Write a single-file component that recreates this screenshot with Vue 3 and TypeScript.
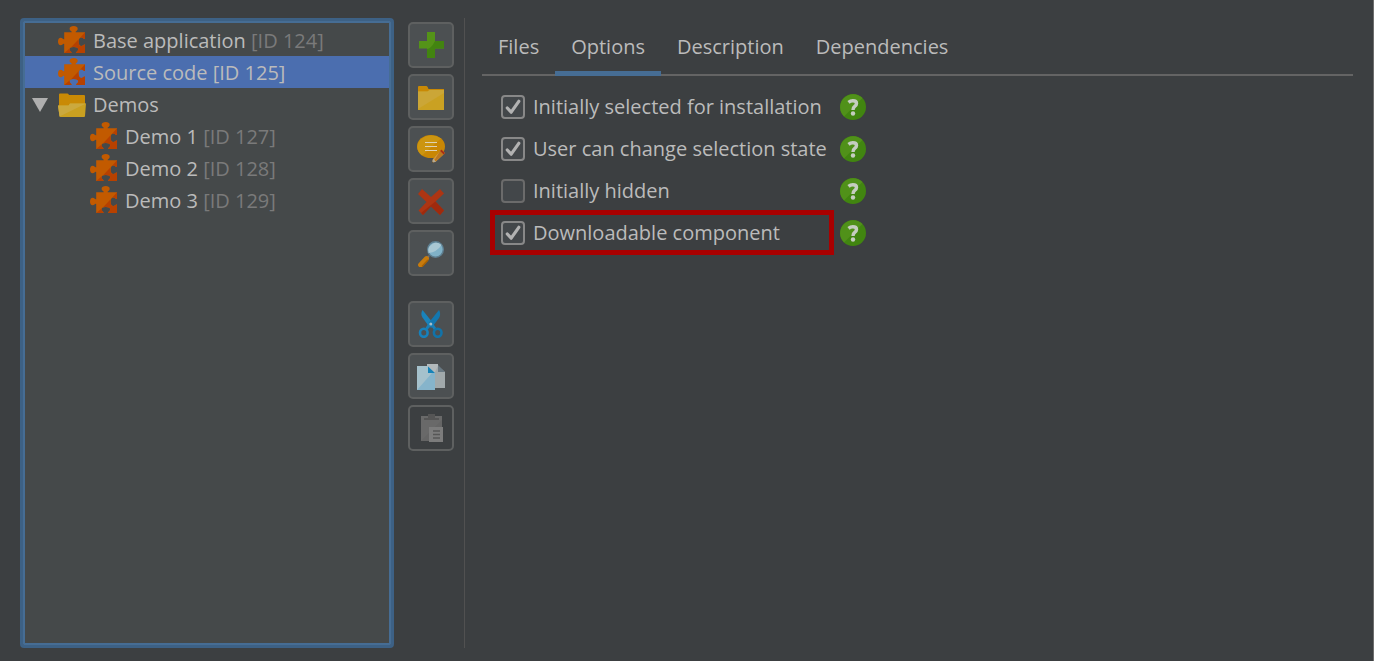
<script setup lang="ts">
import { ref } from 'vue'

interface TreeRow {
  label: string
  id?: number
  level: number
  folder?: boolean
}

interface Option {
  label: string
  checked: boolean
  highlighted?: boolean
}

const rows: TreeRow[] = [
  { label: 'Base application', id: 124, level: 0 },
  { label: 'Source code', id: 125, level: 0 },
  { label: 'Demos', level: 0, folder: true },
  { label: 'Demo 1', id: 127, level: 1 },
  { label: 'Demo 2', id: 128, level: 1 },
  { label: 'Demo 3', id: 129, level: 1 },
]
const selected = ref(1)

const tabs = ['Files', 'Options', 'Description', 'Dependencies']
const activeTab = ref('Options')

const options = ref<Option[]>([
  { label: 'Initially selected for installation', checked: true },
  { label: 'User can change selection state', checked: true },
  { label: 'Initially hidden', checked: false },
  { label: 'Downloadable component', checked: true, highlighted: true },
])
</script>

<template>
  <main class="window">
    <div class="tree" role="tree" aria-label="Components" tabindex="0">
      <div
        v-for="(row, i) in rows"
        :key="row.label"
        class="row"
        :class="{ selected: i === selected, child: row.level === 1 }"
        role="treeitem"
        :aria-selected="i === selected"
        :aria-level="row.level + 1"
        @click="selected = i"
      >
        <span class="twisty">
          <svg v-if="row.folder" width="16" height="14" viewBox="0 0 16 14">
            <path d="M0 0H16L8 14Z" fill="#afafaf" />
          </svg>
        </span>
        <svg v-if="row.folder" class="icon" width="28" height="28" viewBox="0 0 28 28">
          <path d="M1 4.500Q1 3.500 2 3.500H9.500Q10.500 3.500 11 5H26Q27 5 27 6V18H1Z" fill="#c98a05" />
          <path d="M0 15.500H10.500L12 13.500H28L27 26Q27 27 26 27H2.500Q1.500 27 1.500 26Z" fill="#c9a021" />
          <path d="M0 15.500H10.500L12 13.500H28L1.500 26.500Z" fill="#cba93e" />
        </svg>
        <svg v-else class="icon" width="28" height="28" viewBox="0 0 28 28">
          <path
            d="M6.200 6.300H13.700C14.200 5.200 11.600 4.800 11.600 2.700C11.600 1 13.500 0 15.700 0C18 0 19.700 1 19.700 2.700C19.700 4.800 17.200 5.200 17.700 6.300H27V12.800C25.800 13.600 25.200 11.500 23.300 11.500C21.600 11.500 20.600 13.400 20.600 15.800C20.600 18.200 21.600 20 23.300 20C25.200 20 25.800 18 27 18.800V27H18.300C17.700 25.800 20.200 25.300 20.200 23.300C20.200 21.700 18.200 20.900 15.900 20.900C13.600 20.900 11.600 21.700 11.600 23.300C11.600 25.300 14.100 25.800 13.500 27H6.200V18C5 17.300 4.600 19.300 2.700 19.300C1 19.300 0 17.700 0 15.600C0 13.500 1 11.800 2.700 11.800C4.600 11.800 5 13.900 6.200 13.200Z"
            fill="#c25a00"
          />
          <path
            d="M27 6.300V12.800C25.800 13.600 25.200 11.500 23.300 11.500C22.700 11.500 22.100 11.800 21.700 12.200ZM20.600 13.200C20.300 16 20.900 20 23.300 20C25.200 20 25.800 18 27 18.800V27H18.300C17.700 25.800 20.200 25.300 20.200 23.300C20.200 21.700 18.200 20.900 15.900 20.900C14.900 20.900 13.900 21 13.100 21.300L20.600 13.200ZM11.600 22.500V23.300C11.600 25.300 14.100 25.800 13.500 27H6.200Z"
            fill="#b74100"
          />
        </svg>
        <span class="name">{{ row.label }} <span v-if="row.id" class="id">[ID {{ row.id }}]</span></span>
      </div>
    </div>

    <div class="toolbar" role="toolbar" aria-label="Component actions">
      <div class="group">
        <button class="tool" type="button" aria-label="Add component">
          <svg width="28" height="28" viewBox="0 0 28 28">
            <path d="M10 1H18V10H27V17.500H18V27H10V17.500H2V10H10Z" fill="#549318" />
            <path d="M27 10V17.500H18V27H10V18Q14 18 18 10Z" fill="#428410" />
          </svg>
        </button>
        <button class="tool" type="button" aria-label="Add folder">
          <svg width="28" height="28" viewBox="0 0 28 28">
            <path d="M1 4Q1 3 2 3H9.500Q10.500 3 11.500 6H27V10H1Z" fill="#c98905" />
            <path d="M1 8.500H10.500L12.500 7H27V27H1Z" fill="#caa122" />
            <path d="M1 8.500H10.500L12.500 7H27V10L1 26Z" fill="#cba637" />
          </svg>
        </button>
        <button class="tool" type="button" aria-label="Edit comment">
          <svg width="28" height="28" viewBox="0 0 28 28">
            <ellipse cx="14" cy="11.500" rx="14" ry="11.500" fill="#c98704" />
            <path d="M5 20.500A14 11.500 0 1 1 24 3.500Z" fill="#cc9510" />
            <path d="M8 7.500H20M8 11.500H20M8 15.500H20" stroke="#ded1b4" stroke-width="1.200" />
            <path d="M24.500 14.500L28 18L19 26.500L15 28L16 24Z" fill="#d39a3f" />
            <path d="M23 16L26.500 19.500L18.500 26.500L17.500 25Z" fill="#bc7820" />
            <path d="M24.500 14.500L28 18L26.500 19.500L23 16Z" fill="#a92f13" />
            <path d="M16 24L19 26.500L15 28Z" fill="#b7ab94" />
            <path d="M15.400 26.500L16.800 27.500L15 28Z" fill="#4a3b26" />
          </svg>
        </button>
        <button class="tool" type="button" aria-label="Delete">
          <svg width="28" height="28" viewBox="0 0 28 28">
            <path d="M5 2L14 10L23 2L27 6.500L18.500 14.500L27 23.500L23 28L14 19.500L6 28L1.500 23.500L9.500 15L1 7Z" fill="#ad3513" />
            <path d="M18.500 14.500L27 23.500L23 28L14 19.500L6 28L4 26Z" fill="#9f2a0d" />
          </svg>
        </button>
        <button class="tool" type="button" aria-label="Search">
          <svg width="28" height="28" viewBox="0 0 28 28">
            <path d="M9 20L12 17" stroke="#707578" stroke-width="2" />
            <path d="M3.500 26L9.500 19.500" stroke="#c87b0c" stroke-width="4.800" stroke-linecap="round" />
            <path d="M5 27.500L11 21" stroke="#a96202" stroke-width="1.500" />
            <circle cx="18.500" cy="10.500" r="7.800" fill="#80b2c8" stroke="#5e7f91" stroke-width="1.400" />
            <path d="M11.500 14A8 8 0 0 1 24.500 6Q20 13 11.500 14Z" fill="#a9c8d4" />
          </svg>
        </button>
      </div>
      <div class="group">
        <button class="tool" type="button" aria-label="Cut">
          <svg width="28" height="28" viewBox="0 0 28 28">
            <path d="M5.500 0Q3.200 4 5.500 7.500L13 18L16 13Z" fill="#1a83bb" />
            <path d="M22 0Q24.300 4 22 8L14.500 18L11.500 13Z" fill="#1377af" />
            <path d="M12.500 14.500L9.500 19M15 14.500L18 19" stroke="#187fb7" stroke-width="3" />
            <ellipse cx="6.800" cy="22.800" rx="3.800" ry="4" fill="none" stroke="#1681bc" stroke-width="2.600" />
            <ellipse cx="20.700" cy="22.800" rx="3.800" ry="4" fill="none" stroke="#1173a9" stroke-width="2.600" />
            <circle cx="13.800" cy="14" r="1.500" fill="#a6bfcb" />
          </svg>
        </button>
        <button class="tool" type="button" aria-label="Copy">
          <svg width="28" height="28" viewBox="0 0 28 28">
            <path d="M10 2H21V26H10Z" fill="#b2b9bb" />
            <path d="M18 10L21 4L28 10V26H18Z" fill="#a1a9ab" />
            <path d="M21 3L28 10H21Z" fill="#697983" />
            <path d="M0 4H11V11H18V28H0Z" fill="#86b4cb" />
            <path d="M0 4H11V11H15L0 28Z" fill="#a5c1cc" />
            <path d="M11 4.500L18 11H11Z" fill="#1683b8" />
          </svg>
        </button>
        <button class="tool inactive" type="button" aria-label="Paste" disabled>
          <svg width="28" height="28" viewBox="0 0 28 28">
            <path d="M4 2H25V27H4Z" fill="#696969" />
            <path d="M4 27L25 6V27Z" fill="#656565" />
            <path d="M7 4V6H22V4H18V0H11V4Z" fill="#555" />
            <path d="M12 13H26V28H12Z" fill="#7c7c7c" />
            <path d="M16 17H23M16 20.500H23M16 24H23" stroke="#565656" stroke-width="1.500" />
          </svg>
        </button>
      </div>
    </div>

    <section class="details">
      <div class="tabs" role="tablist">
        <button
          v-for="tab in tabs"
          :key="tab"
          class="tab"
          :class="{ active: tab === activeTab }"
          type="button"
          role="tab"
          :aria-selected="tab === activeTab"
          @click="activeTab = tab"
        >
          {{ tab }}
        </button>
      </div>
      <div class="options" role="tabpanel">
        <template v-for="option in options" :key="option.label">
          <label class="option" :class="{ highlighted: option.highlighted }">
            <span class="box">
              <input v-model="option.checked" type="checkbox" />
              <svg v-if="option.checked" width="24" height="24" viewBox="0 0 24 24">
                <path
                  d="M6.300 13L10.200 17.200L17.800 6.300"
                  fill="none"
                  stroke="#b2b2b2"
                  stroke-width="3.200"
                  stroke-linecap="round"
                  stroke-linejoin="round"
                />
              </svg>
            </span>
            <span>{{ option.label }}</span>
          </label>
          <button class="help" type="button" :aria-label="'Help: ' + option.label">
            <svg width="26" height="26" viewBox="0 0 26 26">
              <circle cx="13" cy="13" r="13" fill="#418510" />
              <path d="M4 22.400A13 13 0 0 1 22.500 4Z" fill="#509119" />
              <path
                d="M8.500 8.300Q10.500 6.700 12.800 6.700Q16.500 6.700 16.500 9.400Q16.500 11 14.700 12.300Q13 13.500 13 16"
                fill="none"
                stroke="#c5cdc0"
                stroke-width="3.500"
              />
              <circle cx="13" cy="19.500" r="2.200" fill="#c5cdc0" />
            </svg>
          </button>
        </template>
      </div>
    </section>
  </main>
</template>

<style>
html,
body {
  background: #3c3f41;
}
</style>

<style scoped>
.window {
  box-sizing: border-box;
  display: flex;
  min-height: 100vh;
  padding: 18px 20px 13px;
  border-right: 1px solid #6e6e6e;
  background: #3c3f41;
  color: #bbb;
  font: 20px/32px "Open Sans", "Noto Sans", sans-serif;
}

button {
  margin: 0;
  padding: 0;
  font: inherit;
  color: inherit;
}

.tree {
  box-sizing: border-box;
  flex: 0 0 374px;
  padding: 3px 2px;
  border: 3px solid #3d6185;
  border-radius: 4px;
  background: #45494a;
  box-shadow: inset 0 0 0 2px #466d94;
  outline: none;
}

.row {
  display: flex;
  align-items: center;
  height: 32px;
  padding-left: 7px;
  white-space: nowrap;
}

.row.child {
  padding-left: 39px;
}

.row.selected {
  background: #4b6eaf;
}

.twisty {
  display: flex;
  flex: 0 0 26px;
  padding-top: 2px;
}

.icon {
  flex: none;
}

.name {
  margin-left: 7px;
  padding-top: 2px;
}

.id {
  color: #7a7a7a;
}

.selected .id {
  color: inherit;
}

.toolbar {
  display: flex;
  flex: none;
  flex-direction: column;
  gap: 25px;
  padding: 4px 10px 0 14px;
  border-right: 1px solid #515151;
}

.group {
  display: flex;
  flex-direction: column;
  gap: 6px;
}

.tool {
  box-sizing: border-box;
  display: flex;
  align-items: center;
  justify-content: center;
  width: 46px;
  height: 46px;
  border: 2px solid #5e6060;
  border-radius: 5px;
  background: #4c5052;
}

.tool.inactive {
  background: #3c3f41;
}

.details {
  flex: 1;
  min-width: 0;
  padding-left: 17px;
}

.tabs {
  display: flex;
  height: 56px;
  border-bottom: 2px solid #646464;
}

.tab {
  height: 58px;
  padding: 5px 16px 0;
  border: 0;
  border-bottom: 5px solid transparent;
  background: none;
}

.tab.active {
  border-bottom-color: #466d94;
}

.options {
  display: grid;
  grid-template-columns: max-content max-content;
  grid-auto-rows: 42px;
  align-items: center;
  column-gap: 13px;
  padding: 10px 0 0 19px;
}

.option {
  position: relative;
  display: flex;
  align-items: center;
  gap: 8px;
}

.option.highlighted::after {
  content: "";
  position: absolute;
  inset: -7px -7px -6px -11px;
  border: 5px solid #a90000;
  pointer-events: none;
}

.box {
  display: grid;
  width: 24px;
  height: 24px;
}

.box > * {
  grid-area: 1 / 1;
}

.box svg {
  pointer-events: none;
}

.box input {
  appearance: none;
  box-sizing: border-box;
  width: 24px;
  height: 24px;
  margin: 0;
  border: 2px solid #6b6b6b;
  border-radius: 4px;
  background: #43474a;
}

.box input:checked {
  border-color: #888;
}

.help {
  display: flex;
  border: 0;
  border-radius: 50%;
  background: none;
}
</style>
